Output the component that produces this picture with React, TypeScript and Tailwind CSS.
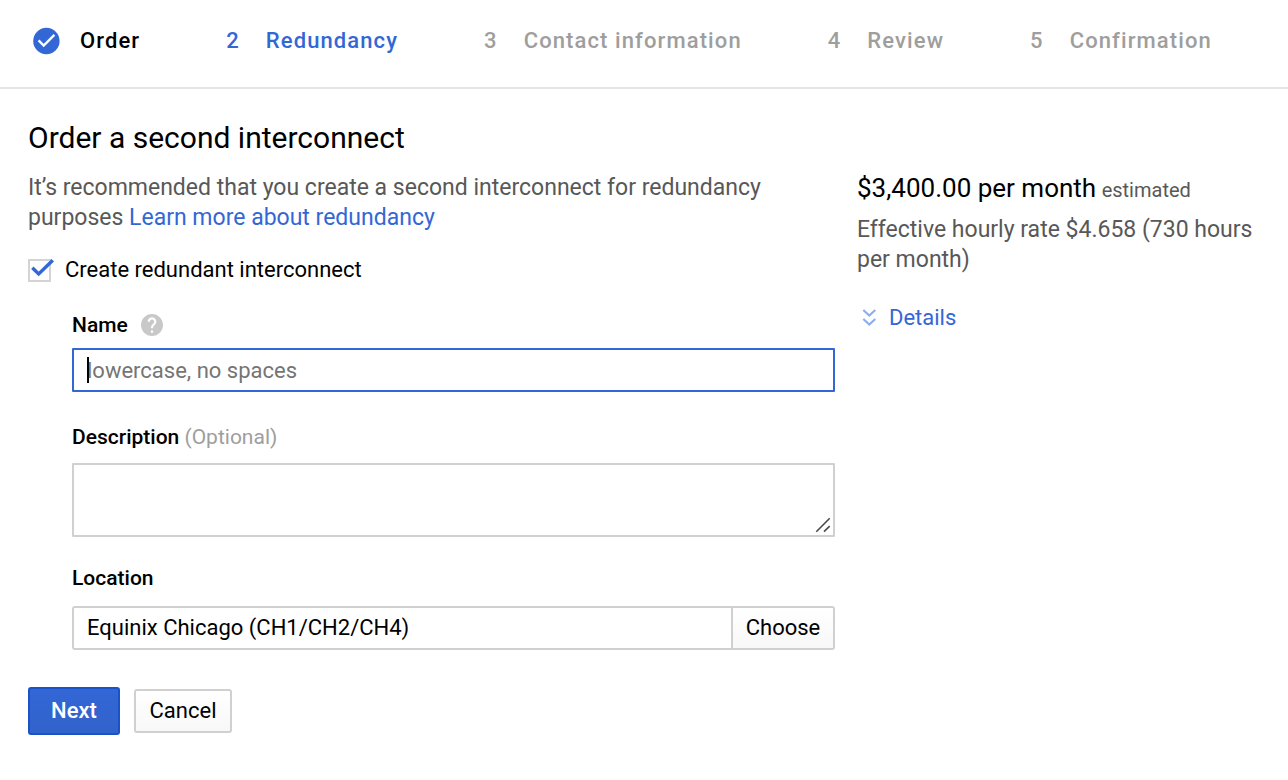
import React from "react";

const upcoming = [
  { n: 3, label: "Contact information" },
  { n: 4, label: "Review" },
  { n: 5, label: "Confirmation" },
];

export default function App() {
  return (
    <div className="min-h-screen bg-white font-['Roboto',sans-serif] text-[22px] leading-[30px] text-black">
      <nav aria-label="Progress" className="border-b-2 border-[#e4e4e4] px-8 pt-[25px] pb-[30px]">
        <ol className="flex items-center gap-[86px] leading-8 font-medium tracking-wider whitespace-nowrap">
          <li className="flex items-center gap-5">
            <svg viewBox="0 0 28 28" className="size-7" aria-hidden="true">
              <circle cx="14.4" cy="14" r="13.2" fill="#3367d6" />
              <path d="m6.6 13.4 5.1 5.1L22.4 7.9" fill="none" stroke="#fff" strokeWidth="2.4" />
            </svg>
            <span>Order</span>
          </li>
          <li aria-current="step" className="flex gap-[26px] text-[#3367d6]">
            <span>2</span>
            <span>Redundancy</span>
          </li>
          {upcoming.map((s) => (
            <li key={s.n} className="flex gap-[26px] text-[#9e9e9e]">
              <span>{s.n}</span>
              <span>{s.label}</span>
            </li>
          ))}
        </ol>
      </nav>

      <main className="flex gap-[22px] px-7 pt-[29px]">
        <form className="w-[807px] shrink" onSubmit={(e) => e.preventDefault()}>
          <h1 className="text-[30px] leading-10">Order a second interconnect</h1>
          <p className="mt-[15px] text-[23px] text-[#585858]">
            It’s recommended that you create a second interconnect for redundancy purposes{" "}
            <a href="#redundancy" className="text-[#3367d6]">Learn more about redundancy</a>
          </p>
          <label className="mt-[22px] flex items-center gap-3">
            <span className="relative flex size-[25px]">
              <input type="checkbox" defaultChecked className="peer mt-px size-[23px] appearance-none border-2 border-[#d4d4d4] bg-white" />
              <svg viewBox="0 0 28 26" className="pointer-events-none absolute top-0 left-0 hidden h-[26px] w-7 peer-checked:block" aria-hidden="true">
                <path d="m4.3 9.8 6.4 6.2L24.8 2.2" fill="none" stroke="#3367d6" strokeWidth="3.4" />
              </svg>
            </span>
            Create redundant interconnect
          </label>

          <div className="ml-[44px]">
            <div className="mt-[25px] flex items-center gap-[13px]">
              <label htmlFor="name" className="text-[21px] leading-[30px] font-medium">Name</label>
              <svg viewBox="2 2 20 20" className="size-[22px]" aria-hidden="true">
                <path
                  fill="#c8c8c8"
                  d="M12 2C6.48 2 2 6.48 2 12s4.48 10 10 10 10-4.48 10-10S17.52 2 12 2zm1 17h-2v-2h2v2zm2.07-7.75-.9.92C13.45 12.9 13 13.5 13 15h-2v-.5c0-1.1.45-2.1 1.17-2.83l1.24-1.26c.37-.36.59-.86.59-1.41 0-1.1-.9-2-2-2s-2 .9-2 2H8c0-2.21 1.79-4 4-4s4 1.79 4 4c0 .88-.36 1.68-.93 2.25z"
                />
              </svg>
            </div>
            <div className="relative mt-2">
              <input
                id="name"
                autoFocus
                placeholder="lowercase, no spaces"
                className="peer block h-11 w-full rounded-[1px] border-2 border-[#3367d6] px-[13px] outline-none placeholder-shown:caret-transparent placeholder:text-[#757575]"
              />
              <span className="pointer-events-none absolute top-[9px] left-[15px] hidden h-[26px] w-0.5 bg-black peer-placeholder-shown:peer-focus:block" />
            </div>

            <label htmlFor="description" className="mt-[30px] block text-[21px] leading-[30px]">
              <span className="font-medium">Description</span> <span className="text-[#9e9e9e]">(Optional)</span>
            </label>
            <div className="relative mt-[11px]">
              <textarea id="description" className="block h-[74px] w-full resize-none rounded-[1px] border-2 border-[#d0d0d0] px-[13px] outline-none" />
              <svg viewBox="0 0 16 16" className="pointer-events-none absolute right-1 bottom-1 size-4" fill="none" stroke="#4a4a4a" strokeWidth="1.6" aria-hidden="true">
                <path d="M1.3 14.7 14.7 1.3M9 14.7l5.7-5.5" />
              </svg>
            </div>

            <label htmlFor="location" className="mt-[26px] block text-[21px] leading-[30px] font-medium">Location</label>
            <div className="mt-[13px] flex h-11 rounded-[3px] border-2 border-[#d0d0d0]">
              <input id="location" readOnly defaultValue="Equinix Chicago (CH1/CH2/CH4)" className="min-w-0 grow px-[13px] outline-none" />
              <button type="button" className="w-[102px] border-l-2 border-[#d0d0d0] bg-linear-to-b from-white to-[#f8f8f8]">Choose</button>
            </div>
          </div>

          <div className="mt-[37px] flex items-center gap-[14px]">
            <button type="submit" className="h-12 w-[92px] rounded-[3px] border-2 border-[#1a53c8] bg-linear-to-b from-[#3367d6] to-[#3262cb] font-medium text-white">Next</button>
            <button type="button" className="h-11 w-[98px] rounded-[3px] border-2 border-[#d0d0d0] bg-linear-to-b from-white to-[#f8f8f8]">Cancel</button>
          </div>
        </form>

        <aside className="min-w-0 flex-1 pt-[55px]">
          <p>
            <span className="text-[26px]">$3,400.00 per month</span> <span className="text-xl text-[#585858]">estimated</span>
          </p>
          <p className="mt-[10px] text-[23px] text-[#585858]">Effective hourly rate $4.658 (730 hours per month)</p>
          <button type="button" className="mt-7 flex items-center gap-3 pl-1 text-[#3367d6]">
            <svg viewBox="0 0 16 20" className="h-5 w-4" fill="none" stroke="#8eaef0" strokeWidth="2.2" aria-hidden="true">
              <path d="m2.3 2 6 5.6L14.3 2M2.3 11l6 5.6 6-5.6" />
            </svg>
            Details
          </button>
        </aside>
      </main>
    </div>
  );
}
